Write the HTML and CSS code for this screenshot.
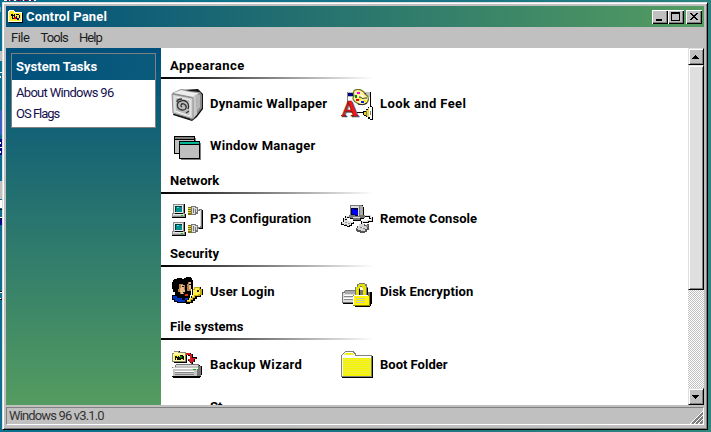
FILE: index.html
```
<!DOCTYPE html>
<html lang="en">
<head>
<meta charset="utf-8">
<title>Control Panel</title>
<link rel="stylesheet" href="styles.css">
</head>
<body>
<svg class="backdrop" width="40" height="432" viewBox="0 0 40 432" shape-rendering="crispEdges">
  <path fill="#fff" d="M4 0h3v1H4zM9 0h1v1H9zM14 0h2v1h-2zM23 0h1v1h-1zM29 0h2v1h-2zM34 0h2v1h-2z"/>
  <path fill="#800040" d="M7 0h2v1H7zM11 0h2v1h-2zM17 0h3v1h-3zM21 0h1v1h-1zM25 0h3v1h-3zM31 0h2v1h-2z"/>
  <path fill="#6a9fb8" d="M0 7h1v5H0z"/>
  <path fill="#c0c0c0" d="M0 51h2v10H0zM0 181h2v18H0z"/>
  <path fill="#fff" d="M0 72h2v1H0zM0 76h1v2H0zM0 200h2v8H0zM0 217h2v1H0z"/>
  <path fill="#3c62c8" d="M0 110h2v25H0z"/>
  <path fill="#00008a" d="M0 139h2v16H0zM0 219h2v6H0z"/>
  <path fill="#fff" d="M0 142h1v2H0zM0 147h2v1H0zM0 151h1v2H0zM0 292h2v1H0zM0 298h1v1H0z"/>
  <path fill="#000" d="M0 209h2v1H0zM0 218h2v1H0zM0 291h2v1H0zM0 299h2v1H0z"/>
</svg>
<div class="window">
  <header class="titlebar">
    <svg width="16" height="16" viewBox="0 0 16 16" shape-rendering="crispEdges">
      <path fill="#000" d="M2 13h13V4h1v10H2z"/>
      <path fill="#fff" d="M2 1h5v1h1v1h7v10H1V2h1z"/>
      <path fill="#ffe920" d="M3 2h4v2h7v8H2V3h1z"/>
      <path fill="#000" d="M4 5h2v1h1v-1h1v3H7V7H6v2H5V7H4zM9 5h3v1H9zM9 7h1v3H8V8h1zM12 6h1v3h-1zM5 9h2v1H5z"/>
      <path fill="#e00000" d="M7 8h2v2H7z"/><path fill="#0000d0" d="M10 9h2v2h-2z"/>
    </svg>
    <h1 class="t-title">Control Panel</h1>
    <div class="controls">
      <button aria-label="Minimize"><svg width="16" height="14" viewBox="0 0 16 14" shape-rendering="crispEdges"><path d="M4 9h6v2H4z"/></svg></button>
      <button aria-label="Maximize"><svg width="16" height="14" viewBox="0 0 16 14" shape-rendering="crispEdges"><path fill-rule="evenodd" d="M3 2h9v9H3zM4 4v6h7V4z"/></svg></button>
      <button class="close" aria-label="Close"><svg width="16" height="14" viewBox="0 0 16 14" shape-rendering="crispEdges"><path d="M4 3h2v1h1v1h2V4h1V3h2v1h-1v1h-1v1H9v1h1v1h1v1h1v1h-2V9H9V8H7v1H6v1H4V9h1V8h1V7h1V6H6V5H5V4H4z"/></svg></button>
    </div>
  </header>
  <nav class="menu"><span class="t-file">File</span><span class="t-tools">Tools</span><span class="t-help">Help</span></nav>
  <div class="body">
    <aside class="sidebar">
      <div class="tasks">
        <h2>System Tasks</h2>
        <ul><li><a class="t-about">About Windows 96</a></li><li><a class="t-flags">OS Flags</a></li></ul>
      </div>
    </aside>
    <main>
      <section>
        <h3 class="t-appearance">Appearance</h3>
        <div class="grid">
          <div class="item">
            <svg width="32" height="32" viewBox="0 0 32 32">
              <path fill="#111" d="M10 1 27 0l5 5v15l-6 8-5 4L2 26z"/>
              <path fill="#8a8a8a" d="M1 4 10 0l10 2 9 1 2 3v13l-6 8-5 4z"/>
              <path fill="#b5b5b5" d="m25 5 4 1v12l-3 4z"/>
              <path fill="#ededed" d="m2 4 8-3 9 2 9 1-6 4z"/>
              <path fill="#c8c8c8" d="m22 8 3-3 1 20-4 5z"/>
              <path fill="#d2d2d2" stroke="#8c8c8c" d="M1 5 22 9v21L2 24z"/>
              <path fill="#bcbcbc" stroke="#f3f3f3" d="m4 8 15 3v16L4 22z"/>
              <path fill="none" stroke="#333" stroke-width="1.300" d="M11 18c-2-1-1-4 2-3 4 2 2 7-2 6-6-1-6-8-1-9 5-2 9 3 7 8M6 13c0-2 2-3 5-3M15 24l3-2"/>
            </svg>
            <span class="t-wallpaper">Dynamic Wallpaper</span>
          </div>
          <div class="item">
            <svg width="32" height="32" viewBox="0 0 32 32">
              <g shape-rendering="crispEdges">
              <path fill="#808080" d="M6 3h1v13H6z"/><path fill="#000" d="M29 3h1v14h-1zM16 23h7v1h-7z"/>
              <path fill="#c0c0c0" d="M7 3h22v5H7z"/><path fill="#000087" d="M7 4h18v3H7z"/><path fill="#fff" d="M7 8h22v15H7z"/>
              </g>
              <path fill="#fff4a0" stroke="#77751c" stroke-width="1.200" d="M14 1c4-2 9 1 10 4 5 3 4 8 0 10-4 1-6 1-8-1-4-2-5-5-3-7-1-3-1-5 1-6z"/>
              <path fill="none" stroke="#222" d="M18 8c2 0 3 1 4 2 1-1 2-1 4-1M17 15c3 1 6 1 9-1"/>
              <g shape-rendering="crispEdges"><path fill="#ffe100" d="M18 9h2v2h-2zM23 11h2v2h-2z"/>
              <path fill="#ff00e0" d="M16 3h3v2h-3z"/><path fill="#008a00" d="M14 6h2v3h-2z"/><path fill="#e00000" d="M15 10h3v2h-3z"/><path fill="#0020ef" d="M20 12h3v2h-3z"/><path fill="#fff" d="M20 6h2v2h-2z"/></g>
              <text class="font-glyph-shade" x="1" y="28">A</text><text class="font-glyph" x="0" y="27">A</text>
              <g shape-rendering="crispEdges"><path fill="#000" d="M29 17h2v1h1v13h-3v-1h-2v-2h-2v-1h-2v-1h-1v-4h3v-2h2v-2h2z"/>
              <path fill="#fff" d="M28 18h3v12h-2v-2h-1z"/>
              <path fill="#e5d626" d="M27 19h1v9h-2v-2h-3v-3h2v-2h2z"/><path fill="#777" d="M25 22h1v5h-1zM29 22h1v4h-1z"/></g>
            </svg>
            <span class="t-look">Look and Feel</span>
          </div>
          <div class="item">
            <svg width="32" height="32" viewBox="0 -2 32 32" shape-rendering="crispEdges">
              <path fill="#808080" d="M24 5h1v4h-1zM10 10h20v17H10z"/><path fill="#000" d="M3 3h21v5H9v13H3z"/><path fill="#808080" d="M4 4h19v2H4z"/><path fill="#c0c0c0" d="M4 7h19v1H8v12H4z"/>
              <path fill="#000" d="M8 8h21v18H8z"/><path fill="#00b894" d="M9 9h19v2H9z"/><path fill="#c0c0c0" d="M9 12h19v13H9z"/>
            </svg>
            <span class="t-manager">Window Manager</span>
          </div>
        </div>
      </section>
      <section>
        <h3>Network</h3>
        <div class="grid">
          <div class="item">
            <svg width="32" height="32" viewBox="0 0 32 32" shape-rendering="crispEdges">
              <defs><g id="terminal">
                <path fill="#000" d="M3 0h11v10h1v4H1v-4h2z"/><path fill="#8a8a8a" d="M2 0h11v9H2zM1 9h13v4H1z"/><path fill="#e8e8e8" d="M3 1h9v8H3zM2 10h11v1H2z"/><path fill="#c0c0c0" d="M2 11h11v1H2z"/><path fill="#003b3b" d="M4 2h7v6H4z"/><path fill="#008e8e" d="M5 3h6v5H5z"/><path fill="#65dada" d="M6 3h2v1H6z"/><path fill="#00d500" d="M10 11h2v1h-2z"/><path fill="#000" d="M4 9h8v1H4z"/>
                <path fill="#7f7600" d="M17 3h3v8h-3z"/><path fill="#e1d23b" d="M17 4h3v1h-3zM17 6h3v1h-3zM17 8h3v1h-3z"/><path fill="#777" d="M20 2h5v1h2v2h3v2h-3v3h-2v1h-5z"/><path fill="#ddd" d="M21 3h3v1h2v4h-2v2h-3zM27 5h2v1h-2z"/><path fill="#777" d="M22 4h1v5h-1zM24 5h1v3h-1z"/>
              </g></defs>
              <use href="#terminal"/><use href="#terminal" y="18"/>
              <path fill="#777" d="M28 5h3v19h-4v-1h2V7h-1z"/><path fill="#ddd" d="M29 6h1v16h-1z"/><path fill="#000" d="M31 6h1v19h-4v-1h3z"/>
            </svg>
            <span class="t-p3">P3 Configuration</span>
          </div>
          <div class="item">
            <svg width="32" height="32" viewBox="0 0 32 32" shape-rendering="crispEdges">
              <path fill="none" stroke="#000" stroke-width="2" d="M10 13H5v2H3v3M24 12h5v2h2v3h-4v1h-6v3"/>
              <path fill="none" stroke="#ddd" d="M10 12.500H5v2H3v3M24 11.500h5v2h1v3h-4v1h-5v3"/>
              <path fill="#000" d="M10 1h12v2h1v12h-3v2h-8v-2H9v-3h1z"/>
              <path fill="#777" d="M9 1h12v10h3v3h-5v2h-7v-2H8v-3h1z"/>
              <path fill="#ddd" d="M10 2h8v10h-3v-1h-5zM12 13h7v1h-7z"/><path fill="#aaa" d="M19 2h3v9h-3z"/>
              <path fill="#00004d" d="M10 4h7v8h-3v-1h-4z"/><path fill="#0000f4" d="M11 5h2v1h4v5h-3v-1h-3z"/>
              <path fill="#000" d="M4 16h3v1h3v1h3v2h-2v2H9v1H6v-1H3v-1H0v-3h2v-1h2z"/><path fill="#e0e0e0" d="M4 16h3v1h3v1h2v1h-2v2H8v1H6v-1H3v-1H1v-2h2z"/><path fill="#999" d="M4 18h2v1H4zM7 19h2v1H7zM4 20h2v1H4z"/>
              <path fill="#555" d="M19 20h5v1h2v-1h2v6h-2v2h-2v1h-5v-1h-3v-1h-1v-3h1v-2h3z"/><path fill="#d4d4d4" d="M18 20h5v2h3v3h-2v2h-4v-1h-3v-1h-1v-1h1v-2h1z"/><path fill="#888" d="M19 23h2v1h-2zM22 24h2v1h-2zM25 21h2v2h-2z"/>
            </svg>
            <span class="t-remote">Remote Console</span>
          </div>
        </div>
      </section>
      <section>
        <h3 class="t-security">Security</h3>
        <div class="grid">
          <div class="item">
            <svg width="32" height="32" viewBox="0 2 32 32" shape-rendering="crispEdges">
              <path fill="#000" d="M3 4h3V3h5v1h2V3h2V2h5v1h1v2h1v9h-2v6h-5v6H6v-5H4v-4H2v-3H1V7h1V5h1z"/>
              <path fill="#b78345" d="M8 9h4v1h2v8h-1v3H9v-4H7v-3h1zM17 7h3v9h-4V9h1z"/><path fill="#e8bd88" d="M10 10h3v5h1v2h-2v3h-2v-3H9v-4h1zM18 7h2v7h-2z"/>
              <path fill="#111" d="M11 11h2v1h-2zM18 9h2v1h-2zM12 17h2v1h-2z"/>
              <path fill="#000" d="M1 20h6v-1h12v9H6v-1H3v-2H1z"/><path fill="#0035ca" d="M2 21h4v2h5v2h3v2H7v-1H4v-2H2zM14 23h3v2h-3z"/><path fill="#ef2c00" d="M14 19h3v2h-3z"/>
              <path fill="#000" d="M24 12h6v2h2v6h-2v2h-4v2h-2v2h-2v2h-3v1h-4v-4h2v-2h3v-2h1v-7h3z"/>
              <path fill="#c9a910" d="M23 12h6v2h2v6h-2v1h-5v2h-2v2h-2v2h-4v-2h2v-2h3v-3h1v-6h1z"/><path fill="#ffed4c" d="M24 13h4v2h1v4h-2v1h-4v2h-2v2h-2v2h-3v-1h2v-2h3v-3h1v-5h2z"/><path fill="#222" d="M26 15h2v2h-2z"/>
            </svg>
            <span class="t-user">User Login</span>
          </div>
          <div class="item">
            <svg class="tall" width="32" height="32" viewBox="0 -6 32 32" shape-rendering="crispEdges">
              <path fill="#000" d="M4 9h27v12H2v-1h2z"/><path fill="#777" d="M4 7h22v2h3v11H1V9h2V8h1z"/><path fill="#dcdcdc" d="M4 9h10v10H2v-9h2z"/><path fill="#aaa" d="M4 8h10v3H4z"/><path fill="#fff" d="M3 12h9v1H3zM3 15h9v1H3z"/><path fill="#888" d="M3 13h9v1H3zM3 16h9v1H3z"/>
              <path fill="#777" fill-rule="evenodd" d="M18 0h6v1h2v3h1v8H14V4h2V1h2zM19 4v8h3V4z"/><path fill="#e8e000" d="M18 1h6v2h1v9h-3V5h-1V3h-2v2h-1v7h-3V4h2V2h1z"/><path fill="#000" d="M18 6h1v6h-1zM26 5h1v7h-1zM28 12h2v11h-1v1H14v-1h14z"/>
              <path fill="#8d8500" d="M12 12h17v11H12z"/><path fill="#fff500" d="M13 13h15v9H13z"/><path fill="#fff" d="M13 12h14v1H13zM12 13h1v9h-1z"/><path fill="#c8c8b0" d="M15 15h9v1h-9zM15 17h9v1h-9zM15 19h9v1h-9z"/>
            </svg>
            <span class="t-disk">Disk Encryption</span>
          </div>
        </div>
      </section>
      <section>
        <h3>File systems</h3>
        <div class="grid">
          <div class="item">
            <svg width="32" height="32" viewBox="0 0 32 32" shape-rendering="crispEdges">
              <path fill="#000" d="M4 1h5v2h7v10H3V2h1z"/><path fill="#8b8b75" d="M3 1h5v1h7v10H1V3h2z"/><path fill="#fffaa6" d="M3 2h4v1h7v8H2V4h1z"/><path fill="#fff23a" d="M3 5h10v5H3z"/><path fill="#111" d="M4 6h2v1h1V6h1v4H6V8H5v2H4zM9 5h3v1h1v4h-1V9h-2v1H8V7h1z"/><path fill="#008b00" d="M9 6h2v2H9z"/>
              <path fill="#000" d="M17 3h3v1h2v3h4v2h-2v3h-2v3h-1v-2h-2v-2h-2v-1h3V6h-3z"/><path fill="#cf1b24" d="M15 3h4v1h2v4h4v1h-2v3h-2v2h-1v-2h-2v-2h-1V9h2V5h-4z"/>
              <path fill="#000" d="M7 15h22v1h2v9h-1v2h-1v1H2v-1H1v-9h4v-3h2z"/><path fill="#767676" d="M5 14h23v2h2v10H1v-9h3v-2h1z"/><path fill="#dedede" d="M5 15h22v3H2v-1h3z"/><path fill="#c4c4c4" d="M5 16h22v2H3zM2 19h24v7H2z"/><path fill="#888" d="M4 22h19v1H4zM4 24h19v1H4z"/><path fill="#fff" d="M4 21h19v1H4zM1 18h26v1H1zM1 18h1v8H1z"/><path fill="#00b500" d="M22 19h3v1h-3z"/>
            </svg>
            <span class="t-backup">Backup Wizard</span>
          </div>
          <div class="item">
            <svg width="32" height="32" viewBox="0 -1 32 32" shape-rendering="crispEdges">
              <path fill="#000" d="M31 5h1v22H1v-1h30z"/><path fill="#808080" d="M4 0h9v1h1v1h1v2h16v22H0V4h1V3h1V2h1V1h1z"/><path fill="#fff" d="M4 1h8v1h1v1h1v2h16v20H1V4h1V3h1V2h1z"/><path fill="#f4f400" d="M4 2h8v1h1v1H3V3h1zM2 7h28v18H2z"/><path fill="none" stroke="#e9e97c" stroke-dasharray="1 1" d="M4 3.500h9M3 8.500h26M3 10.500h26M3 12.500h26M3 14.500h26M3 16.500h26M3 18.500h26M3 20.500h26M3 22.500h26"/>
            </svg>
            <span>Boot Folder</span>
          </div>
          <div class="item item-text"><span>St</span></div>
        </div>
      </section>
    </main>
    <div class="scrollbar">
      <div class="arrow"><svg width="12" height="12" viewBox="0 0 12 12" shape-rendering="crispEdges"><path d="M5 4h1v1h1v1h1v1h1v1H2V7h1V6h1V5h1z"/></svg></div>
      <div class="thumb"></div>
      <div class="track"></div>
      <div class="arrow"><svg width="12" height="12" viewBox="0 0 12 12" shape-rendering="crispEdges"><path d="M2 4h7v1H8v1H7v1H6v1H5V7H4V6H3V5H2z"/></svg></div>
    </div>
  </div>
  <footer class="status"><span class="t-status">Windows 96 v3.1.0</span>
    <svg width="13" height="13" viewBox="0 0 13 13" shape-rendering="crispEdges"><path stroke="#fff" d="M0 13 13 0M4 13l9-9M8 13l5-5"/><path stroke="#808080" stroke-width="2" d="M2 13 13 2M6 13l7-7M10 13l3-3"/></svg>
  </footer>
</div>
</body>
</html>
```
FILE: styles.css
```
* { box-sizing: border-box; }
html, body { margin: 0; width: 711px; height: 432px; overflow: hidden; }
body {
  padding: 2px 3px 2px 2px;
  background: linear-gradient(100deg, #087090, #1d7585 60%, #30877f);
  font: 12px/16px Roboto, "Liberation Sans", sans-serif;
  color: #000;
}
h1, h2, h3, ul { margin: 0; padding: 0; font-size: 13px; font-weight: 700; list-style: none; }
svg { display: block; flex: none; }
.backdrop { position: absolute; left: 0; top: 0; }
.window {
  position: relative;
  display: flex;
  flex-direction: column;
  width: 706px;
  height: 428px;
  padding: 3px;
  background: #c0c0c0;
  border: 1px solid;
  border-color: #dfdfdf #000 #000 #dfdfdf;
  box-shadow: inset 1px 1px #fff, inset -1px -1px #808080;
}
.titlebar {
  display: flex;
  align-items: center;
  height: 21px;
  padding: 0 2px 0 1px;
  background: linear-gradient(90deg, #00507c, #549c60);
  color: #fff;
}
.titlebar h1 { margin-left: 3px; }
.controls { display: flex; margin-left: auto; }
.controls button {
  width: 16px;
  height: 14px;
  padding: 0;
  border: 0;
  background: #c0c0c0;
  box-shadow: inset 1px 1px #fff, inset -1px -1px #000, inset -2px -2px #808080;
}
.controls .close { margin-left: 2px; }
.menu { display: flex; height: 21px; padding: 3px 5px; font-size: 13px; color: #1c1c1c; }
.menu span { margin-right: 11px; }
.body { display: flex; height: 357px; overflow: hidden; }
.sidebar { width: 155px; padding: 5px; background: linear-gradient(#00507c, #549c60); }
.tasks { height: 75px; border: 1px solid #808080; background: #fff; }
.tasks h2 { height: 26px; padding: 5px 4px; color: #fff; background: linear-gradient(100deg, #00507c, #0a5b7b); }
.tasks ul { padding: 2px 4px; font-size: 13px; font-weight: 400; line-height: 21px; color: #15104f; }
main { width: 527px; padding-top: 4px; overflow: hidden; background: #fff; font-weight: 700; font-size: 13px; }
h3 { height: 27px; padding: 6px 9px 0; background: linear-gradient(90deg, #000, #fff) 0 25px / 213px 2px no-repeat; }
.grid { display: grid; grid-template-columns: 170px 170px; grid-auto-rows: 42px; padding: 4px 0 0 10px; }
.item { display: flex; align-items: center; gap: 7px; padding-top: 2px; white-space: nowrap; }
.item span { margin-top: -2px; }
.item-text { padding-left: 39px; }
.font-glyph, .font-glyph-shade { font: 700 24px "Liberation Serif", serif; fill: #f01818; stroke: #700000; stroke-width: .5px; }
.font-glyph-shade { fill: #777; stroke: #444; }
.scrollbar { display: flex; flex-direction: column; width: 16px; }
.arrow, .thumb { background: #c0c0c0; border: 1px solid; border-color: #dfdfdf #000 #000 #dfdfdf; box-shadow: inset 1px 1px #fff, inset -1px -1px #808080; }
.arrow { height: 17px; padding: 2px 1px; }
.thumb { height: 225px; background: #dfdfdf; }
.track { flex: 1; background: repeating-conic-gradient(#fff 0 25%, #c0c0c0 0 50%) 0 0 / 2px 2px; }
.status {
  display: flex;
  justify-content: space-between;
  align-items: flex-end;
  height: 18px;
  margin-top: 2px;
  border: 1px solid;
  border-color: #808080 #fff #fff #808080;
  padding-left: 2px;
  font-size: 13px;
  color: #333;
}
.t-title { letter-spacing: .15px; }
.t-file { letter-spacing: -.5px; }
.t-tools { letter-spacing: -.85px; }
.t-help { letter-spacing: -.9px; }
.t-about { letter-spacing: -.7px; }
.t-flags { letter-spacing: -1px; }
.t-status { letter-spacing: -.85px; }
.t-appearance { letter-spacing: .5px; }
.t-security { letter-spacing: .12px; }
.t-wallpaper, .t-manager { letter-spacing: .3px; }
.t-look, .t-backup { letter-spacing: .4px; }
.t-p3, .t-disk { letter-spacing: .14px; }
.t-remote { letter-spacing: .07px; }
.t-user { letter-spacing: .2px; }
```
